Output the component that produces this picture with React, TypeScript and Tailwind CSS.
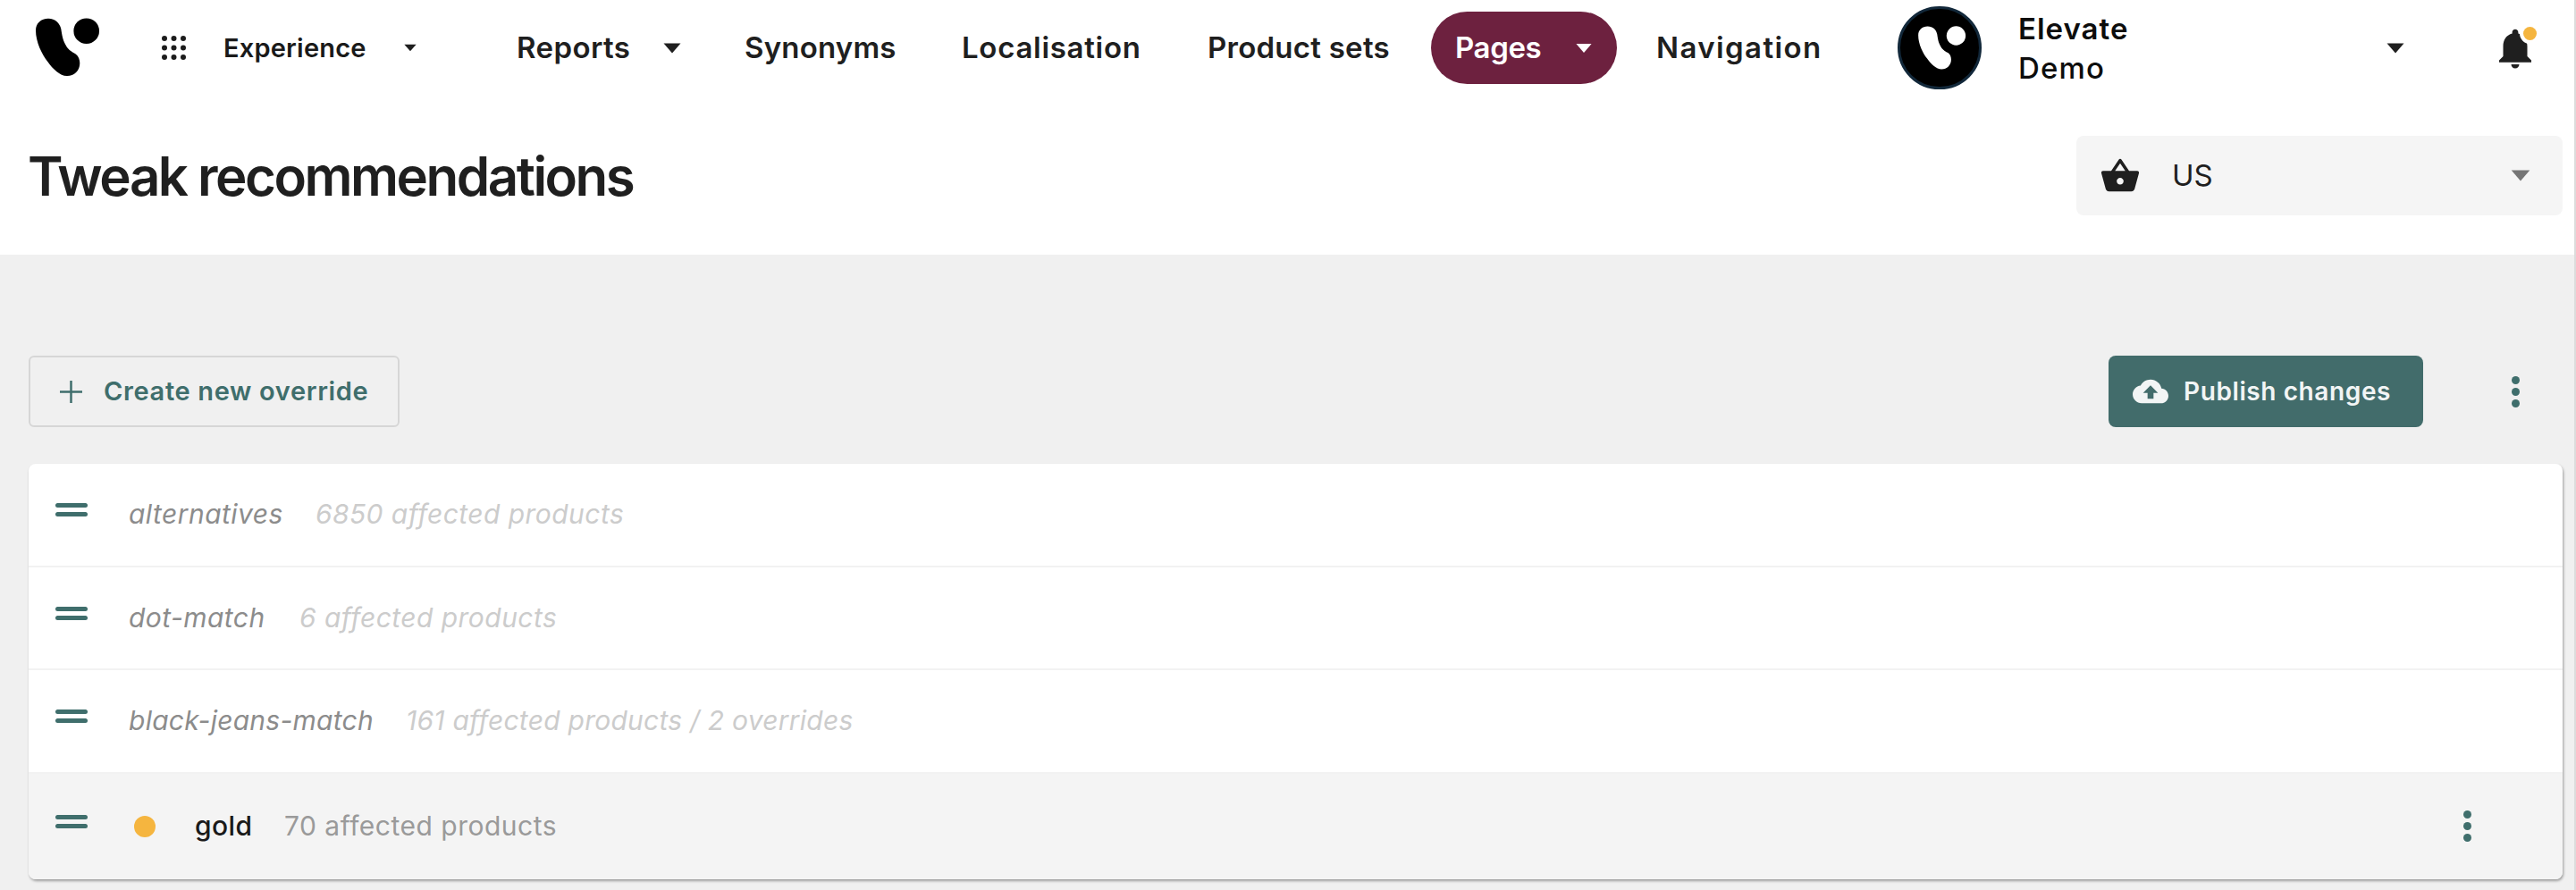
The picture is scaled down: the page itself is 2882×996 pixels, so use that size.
import React from "react";

const font = "font-['Inter','Liberation_Sans',sans-serif]";

const Caret = ({ className }: { className: string }) => (
  <svg viewBox="0 0 20 12" className={className} fill="currentColor">
    <path d="M0.5 0.5h19L10 11.5z" />
  </svg>
);

const Logo = ({ className, fill }: { className: string; fill: string }) => (
  <svg viewBox="0 0 72 67" className={className} fill={fill}>
    <path d="M14 0.7C22 0.7 27 6 28.3 12.3C29.5 20 30 25 35 33C38 37 41 38 45 40.7C48 43 49.3 47 49.3 50.7C49.3 59 43 65 35 65C27 65 19 57 13.3 49C7 41 0 27 0 14C0 6 6 0.7 14 0.7Z" />
    <circle cx="56.7" cy="14.7" r="14.3" />
  </svg>
);

const GridIcon = () => (
  <svg viewBox="0 0 27 27" className="w-[27px] h-[27px] shrink-0" fill="#1c1c1c">
    {[3, 13.5, 24].map((y) =>
      [3, 13.5, 24].map((x) => <circle key={`${x}-${y}`} cx={x} cy={y} r="3" />)
    )}
  </svg>
);

const Kebab = ({ className }: { className: string }) => (
  <div className={`flex flex-col gap-[4px] ${className}`}>
    <span className="w-[9px] h-[9px] rounded-full bg-[#3f6e6c]" />
    <span className="w-[9px] h-[9px] rounded-full bg-[#3f6e6c]" />
    <span className="w-[9px] h-[9px] rounded-full bg-[#3f6e6c]" />
  </div>
);

const DragHandle = () => (
  <div className="flex flex-col gap-[5px] w-[36px] shrink-0 mt-[-10px]">
    <span className="h-[5px] rounded-full bg-[#3f6e6c]" />
    <span className="h-[5px] rounded-full bg-[#3f6e6c]" />
  </div>
);

const NavLink = ({ label, className }: { label: string; className: string }) => (
  <span className={`text-[33px] font-semibold text-[#1f1f1f] whitespace-nowrap ${className}`}>
    {label}
  </span>
);

const rows = [
  { name: "alternatives", info: "6850 affected products", nameW: "w-[209px]", spacing: "tracking-[0.45px]" },
  { name: "dot-match", info: "6 affected products", nameW: "w-[191px]", spacing: "tracking-[0.45px]" },
  { name: "black-jeans-match", info: "161 affected products / 2 overrides", nameW: "w-[310px]", spacing: "tracking-[0.25px]" },
];

const App = () => {
  return (
    <div className={`${font} w-[2882px] h-[996px] bg-[#f0f0f0] overflow-hidden border-r-2 border-[#dcdcdc]`}>
      <header className="bg-white h-[285px] flex flex-col">
        <div className="h-[107px] flex items-center pl-[40px]">
          <Logo className="w-[72px] h-[67px] shrink-0" fill="#000" />
          <div className="ml-[69px]">
            <GridIcon />
          </div>
          <span className="ml-[42px] w-[161px] text-[29px] font-semibold tracking-[0.2px] text-[#1a1a1a]">Experience</span>
          <Caret className="ml-[41px] w-[14px] h-[9px] text-[#1f1f1f]" />
          <NavLink label="Reports" className="ml-[112px] w-[129px] tracking-[0.4px]" />
          <Caret className="ml-[35px] w-[20px] h-[12px] text-[#1f1f1f]" />
          <NavLink label="Synonyms" className="ml-[71px] w-[169px] tracking-[0.2px]" />
          <NavLink label="Localisation" className="ml-[74px] w-[201px] tracking-[0.7px]" />
          <NavLink label="Product sets" className="ml-[74px] w-[204px] tracking-[0.25px]" />
          <div className="ml-[46px] w-[208px] h-[81px] rounded-full bg-[#6d213f] flex items-center pl-[27px]">
            <span className="text-[33px] font-semibold tracking-[-0.4px] text-white w-[99px]">Pages</span>
            <Caret className="ml-[36px] w-[18px] h-[12px] text-white" />
          </div>
          <NavLink label="Navigation" className="ml-[44px] w-[186px] tracking-[1.4px]" />
          <div className="ml-[84px] w-[94px] h-[93px] rounded-full bg-black border-[3px] border-[#12283a] flex items-center justify-center shrink-0">
            <Logo className="w-[54px] h-[50px] ml-[6px]" fill="#fff" />
          </div>
          <div className="ml-[41px] w-[412px] flex flex-col text-[33px] leading-[44px] text-[#0d0d0d]">
            <span className="font-semibold tracking-[1px]">Elevate</span>
            <span className="font-medium tracking-[1.2px]">Demo</span>
          </div>
          <Caret className="w-[20px] h-[12px] text-[#1f1f1f]" />
          <div className="relative ml-[97px] w-[54px] h-[54px] shrink-0">
            <svg viewBox="0 0 24 24" className="w-[54px] h-[54px]" fill="#1f1f1f">
              <path d="M12 22c1.1 0 2-.9 2-2h-4c0 1.1.9 2 2 2zm6-6v-5c0-3.07-1.63-5.64-4.5-6.32V4c0-.83-.67-1.5-1.5-1.5s-1.5.67-1.5 1.5v.68C7.64 5.36 6 7.92 6 11v5l-2 2v1h16v-1l-2-2z" />
            </svg>
            <span className="absolute right-[3px] top-[3px] w-[15px] h-[15px] rounded-full bg-[#f5b53f] ring-4 ring-white" />
          </div>
        </div>
        <div className="flex-1 flex items-start justify-between pl-[31px] pr-[13px]">
          <h1 className="mt-[54px] text-[60px] leading-[72px] font-semibold tracking-[-2.5px] text-[#1f1f1f]">
            Tweak recommendations
          </h1>
          <div className="mt-[45px] w-[544px] h-[89px] rounded-[8px] bg-[#f5f5f5] flex items-center pl-[26px] pr-[36px]">
            <svg viewBox="0 0 24 24" className="w-[46px] h-[46px] shrink-0" fill="#1f1f1f">
              <path d="M17.21 9l-4.38-6.56c-.19-.28-.51-.42-.83-.42-.32 0-.64.14-.83.43L6.79 9H2c-.55 0-1 .45-1 1 0 .09.01.18.04.27l2.54 9.27c.23.84 1 1.46 1.92 1.46h13c.92 0 1.69-.62 1.93-1.46l2.54-9.27L23 10c0-.55-.45-1-1-1h-4.79zM9 9l3-4.4L15 9H9zm3 8c-1.1 0-2-.9-2-2s.9-2 2-2 2 .9 2 2-.9 2-2 2z" />
            </svg>
            <span className="ml-[35px] flex-1 text-[33px] text-[#1f1f1f]">US</span>
            <Caret className="w-[22px] h-[13px] text-[#757575]" />
          </div>
        </div>
      </header>

      <main className="pl-[32px] pr-[13px]">
        <div className="mt-[113px] flex items-center h-[80px]">
          <button className="w-[415px] h-[80px] rounded-[6px] border-2 border-[#d6d6d6] flex items-center pl-[33px]">
            <svg viewBox="0 0 24 24" className="w-[25px] h-[25px] shrink-0" stroke="#3f6e6c" strokeWidth="2.4">
              <path d="M12 0v24M0 12h24" />
            </svg>
            <span className="ml-[24px] text-[29px] font-semibold tracking-[0.65px] text-[#3f6e6c] whitespace-nowrap">Create new override</span>
          </button>
          <button className="ml-auto w-[352px] h-[80px] rounded-[8px] bg-[#426c6b] flex items-center pl-[27px]">
            <svg viewBox="0 0 24 24" className="w-[40px] h-[40px] shrink-0" fill="#f2f5f5">
              <path d="M19.35 10.04C18.67 6.59 15.64 4 12 4 9.11 4 6.6 5.64 5.35 8.04 2.34 8.36 0 10.91 0 14c0 3.31 2.69 6 6 6h13c2.76 0 5-2.24 5-5 0-2.64-2.05-4.78-4.65-4.96zM14 13v4h-4v-4H7l5-5 5 5h-3z" />
            </svg>
            <span className="ml-[17px] text-[28px] font-semibold tracking-[0.6px] text-[#f2f5f5] whitespace-nowrap">Publish changes</span>
          </button>
          <Kebab className="ml-[99px] mr-[48px]" />
        </div>

        <div className="mt-[41px] rounded-[8px] bg-white shadow-[1px_2px_3px_rgba(0,0,0,0.35)] overflow-hidden">
          {rows.map((row) => (
            <div key={row.name} className="h-[115.5px] flex items-center pl-[30px] border-b-2 border-[#f2f2f2]">
              <DragHandle />
              <span className={`ml-[46px] ${row.nameW} text-[30px] italic ${row.spacing} text-[#8c8c8c] whitespace-nowrap`}>{row.name}</span>
              <span className={`text-[30px] italic ${row.spacing} text-[#cccccc] whitespace-nowrap`}>{row.info}</span>
            </div>
          ))}
          <div className="h-[118px] flex items-center pl-[30px] bg-[#f4f4f4]">
            <DragHandle />
            <span className="ml-[52px] w-[24px] h-[24px] rounded-full bg-[#f5b53f] shrink-0" />
            <span className="ml-[44px] w-[100px] text-[30px] font-medium tracking-[0.4px] text-[#1a1a1a]">gold</span>
            <span className="text-[30px] tracking-[0.5px] text-[#9a9a9a] whitespace-nowrap">70 affected products</span>
            <Kebab className="ml-auto mr-[102px]" />
          </div>
        </div>
      </main>
    </div>
  );
};

export default App;
